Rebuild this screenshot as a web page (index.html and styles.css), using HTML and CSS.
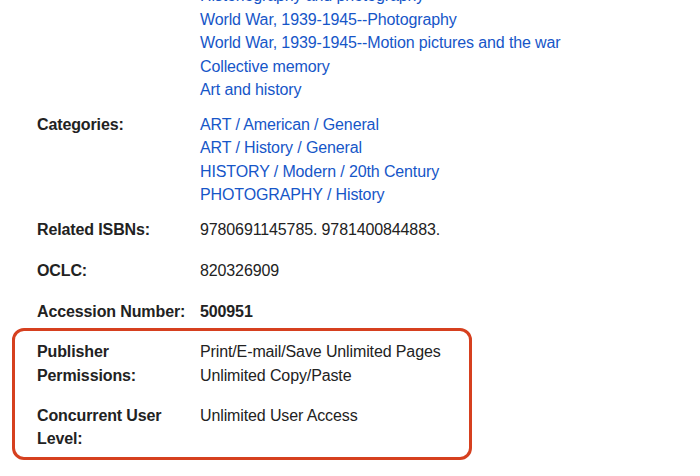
FILE: index.html
```html
<!DOCTYPE html>
<html lang="en">
<head>
    <meta charset="UTF-8">
    <title>Record Details</title>
    <link rel="stylesheet" href="styles.css">
</head>
<body>
    <div class="details">
        <div class="row list-row">
            <div class="label"></div>
            <div class="value">
                <a href="#">Historiography and photography</a>
                <a href="#">World War, 1939-1945--Photography</a>
                <a href="#">World War, 1939-1945--Motion pictures and the war</a>
                <a href="#">Collective memory</a>
                <a href="#">Art and history</a>
            </div>
        </div>
        <div class="row list-row">
            <div class="label">Categories:</div>
            <div class="value">
                <a href="#">ART / American / General</a>
                <a href="#">ART / History / General</a>
                <a href="#">HISTORY / Modern / 20th Century</a>
                <a href="#">PHOTOGRAPHY / History</a>
            </div>
        </div>
        <div class="row">
            <div class="label">Related ISBNs:</div>
            <div class="value">9780691145785. 9781400844883.</div>
        </div>
        <div class="row">
            <div class="label">OCLC:</div>
            <div class="value">820326909</div>
        </div>
        <div class="row last">
            <div class="label">Accession Number:</div>
            <div class="value strong">500951</div>
        </div>

        <div class="highlight">
            <div class="row">
                <div class="label">Publisher<br>Permissions:</div>
                <div class="value">Print/E-mail/Save Unlimited Pages<br>Unlimited Copy/Paste</div>
            </div>
            <div class="row last">
                <div class="label">Concurrent User<br>Level:</div>
                <div class="value">Unlimited User Access</div>
            </div>
        </div>
    </div>
</body>
</html>
```

FILE: styles.css
```css
body {
    margin: 0;
    font-family: "Liberation Sans", Arial, Helvetica, sans-serif;
    font-size: 16px;
    line-height: 23.5px;
    letter-spacing: -0.12px;
    color: #222;
    background: #fff;
}
.details {
    margin-top: -16px;
    padding-left: 12px;
    width: 640px;
}
.row {
    display: grid;
    grid-template-columns: 163px 1fr;
    padding-left: 25px;
    margin-bottom: 17.5px;
}
.list-row {
    margin-bottom: 11px;
}
.row.last {
    margin-bottom: 0;
}
.label {
    font-weight: bold;
    color: #222;
}
.value a {
    display: block;
    color: #1656c8;
    text-decoration: none;
}
.value.strong {
    font-weight: bold;
}
/* box around the licence info */
.highlight {
    width: 454px;
    margin-top: 5px;
    border: 3px solid #d6401f;
    border-radius: 12px;
    padding: 9px 0 6px 0;
}
.highlight .row {
    padding-left: 22px;
    margin-bottom: 16.5px;
}
.highlight .row.last {
    margin-bottom: 0;
}
```
